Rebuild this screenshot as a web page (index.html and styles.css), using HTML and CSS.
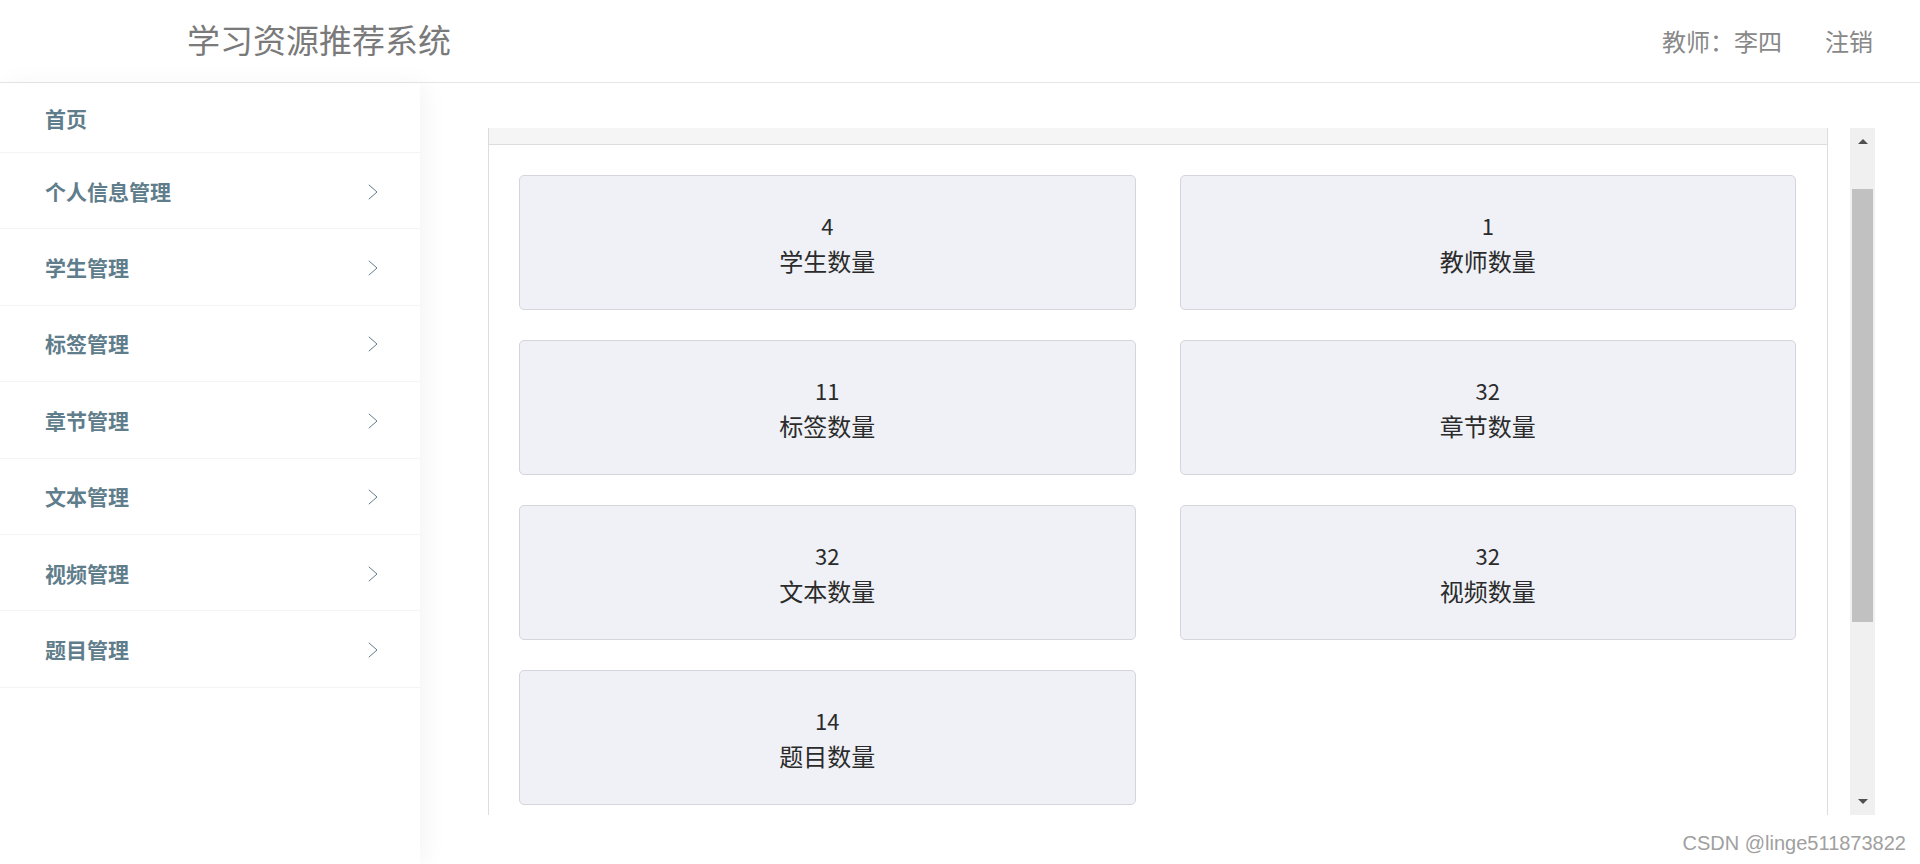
FILE: index.html
```html
<!DOCTYPE html>
<html lang="zh-CN">
<head>
<meta charset="utf-8">
<title>学习资源推荐系统</title>
<link rel="stylesheet" href="styles.css">
</head>
<body>
<header class="header">
  <div class="brand">学习资源推荐系统</div>
  <div class="user">
    <span class="user-name">教师：李四</span>
    <a class="logout">注销</a>
  </div>
</header>
<div class="layout">
  <nav class="sidebar">
    <div class="nav-item nav-home"><span>首页</span></div>
    <div class="nav-item"><span>个人信息管理</span><svg class="chev" width="10" height="16" viewBox="0 0 10 16"><polyline points="0.8,0.8 9,8 0.8,15.2" fill="none" stroke="#607d8b" stroke-width="1"/></svg></div>
    <div class="nav-item"><span>学生管理</span><svg class="chev" width="10" height="16" viewBox="0 0 10 16"><polyline points="0.8,0.8 9,8 0.8,15.2" fill="none" stroke="#607d8b" stroke-width="1"/></svg></div>
    <div class="nav-item"><span>标签管理</span><svg class="chev" width="10" height="16" viewBox="0 0 10 16"><polyline points="0.8,0.8 9,8 0.8,15.2" fill="none" stroke="#607d8b" stroke-width="1"/></svg></div>
    <div class="nav-item"><span>章节管理</span><svg class="chev" width="10" height="16" viewBox="0 0 10 16"><polyline points="0.8,0.8 9,8 0.8,15.2" fill="none" stroke="#607d8b" stroke-width="1"/></svg></div>
    <div class="nav-item"><span>文本管理</span><svg class="chev" width="10" height="16" viewBox="0 0 10 16"><polyline points="0.8,0.8 9,8 0.8,15.2" fill="none" stroke="#607d8b" stroke-width="1"/></svg></div>
    <div class="nav-item"><span>视频管理</span><svg class="chev" width="10" height="16" viewBox="0 0 10 16"><polyline points="0.8,0.8 9,8 0.8,15.2" fill="none" stroke="#607d8b" stroke-width="1"/></svg></div>
    <div class="nav-item"><span>题目管理</span><svg class="chev" width="10" height="16" viewBox="0 0 10 16"><polyline points="0.8,0.8 9,8 0.8,15.2" fill="none" stroke="#607d8b" stroke-width="1"/></svg></div>
  </nav>
  <main class="main">
    <div class="panel">
      <div class="panel-head"></div>
      <div class="cards">
        <div class="card"><div class="num">4</div><div class="label">学生数量</div></div>
        <div class="card"><div class="num">1</div><div class="label">教师数量</div></div>
        <div class="card"><div class="num">11</div><div class="label">标签数量</div></div>
        <div class="card"><div class="num">32</div><div class="label">章节数量</div></div>
        <div class="card"><div class="num">32</div><div class="label">文本数量</div></div>
        <div class="card"><div class="num">32</div><div class="label">视频数量</div></div>
        <div class="card"><div class="num">14</div><div class="label">题目数量</div></div>
      </div>
    </div>
    <div class="scrollbar">
      <div class="sb-btn"><span class="arrow-up"></span></div>
      <div class="sb-thumb"></div>
      <div class="sb-fill"></div>
      <div class="sb-btn"><span class="arrow-down"></span></div>
    </div>
  </main>
</div>
<div class="watermark">CSDN @linge511873822</div>
</body>
</html>
```

FILE: styles.css
```css
* { box-sizing: border-box; }
html, body {
  margin: 0;
  padding: 0;
  height: 864px;
  overflow: hidden;
  background: #fff;
  font-family: "Noto Sans CJK SC", "Noto Sans", sans-serif;
}

.header {
  height: 83px;
  border-bottom: 1px solid #e6e6e6;
  display: flex;
  align-items: center;
  justify-content: space-between;
  padding: 0 47px 0 187px;
}
.brand {
  font-size: 33px;
  color: #7a7a7a;
  line-height: 1;
  margin-top: -4px;
}
.user {
  display: flex;
  align-items: center;
  font-size: 24px;
  color: #888;
  line-height: 1;
}
.logout { margin-left: 43px; color: #888; }

.layout {
  display: flex;
  height: 781px;
}
.sidebar {
  width: 420px;
  flex: none;
  background: #fff;
  box-shadow: 6px 0 22px rgba(0, 0, 0, 0.045);
  position: relative;
  z-index: 1;
}
.nav-item {
  height: 76.4px;
  border-bottom: 1px solid #f4f4f4;
  display: flex;
  align-items: center;
  justify-content: space-between;
  padding: 0 42px 0 45px;
  font-size: 21px;
  font-weight: bold;
  color: #607d8b;
}
.nav-item.nav-home { height: 70px; }
.chev { flex: none; margin-top: 2px; }

.main {
  flex: 1;
  display: flex;
  padding: 45px 45px 49px 68px;
  gap: 22px;
}
.panel {
  flex: 1;
  border-left: 1px solid #dcdcdc;
  border-right: 1px solid #dcdcdc;
  overflow: hidden;
}
.panel-head {
  height: 17px;
  background: #f5f5f5;
  border-bottom: 1px solid #dddddd;
}
.cards {
  display: grid;
  grid-template-columns: 1fr 1fr;
  column-gap: 44px;
  row-gap: 30px;
  padding: 30px 31px 0 30px;
}
.card {
  height: 135px;
  background: #eff1f6;
  border: 1px solid #d4d6dc;
  border-radius: 5px;
  display: flex;
  flex-direction: column;
  align-items: center;
  justify-content: center;
  color: #2b2b2b;
  font-size: 24px;
  line-height: 36px;
}
.num { font-size: 22px; }

.scrollbar {
  width: 25px;
  flex: none;
  background: #f0f0f0;
  display: flex;
  flex-direction: column;
  align-items: center;
}
.sb-btn {
  height: 27px;
  width: 100%;
  display: flex;
  align-items: center;
  justify-content: center;
}
.arrow-up {
  width: 0; height: 0;
  border-left: 5px solid transparent;
  border-right: 5px solid transparent;
  border-bottom: 5px solid #505050;
}
.arrow-down {
  width: 0; height: 0;
  border-left: 5px solid transparent;
  border-right: 5px solid transparent;
  border-top: 5px solid #505050;
}
.sb-thumb {
  width: 21px;
  height: 433px;
  margin-top: 34px;
  background: #c1c1c1;
}
.sb-fill { flex: 1; }

.watermark {
  position: absolute;
  right: 14px;
  bottom: 9px;
  font-family: "Liberation Sans", Arial, sans-serif;
  font-size: 20px;
  color: #a0a0a0;
  text-shadow: 0 0 2px #fff;
}
```
